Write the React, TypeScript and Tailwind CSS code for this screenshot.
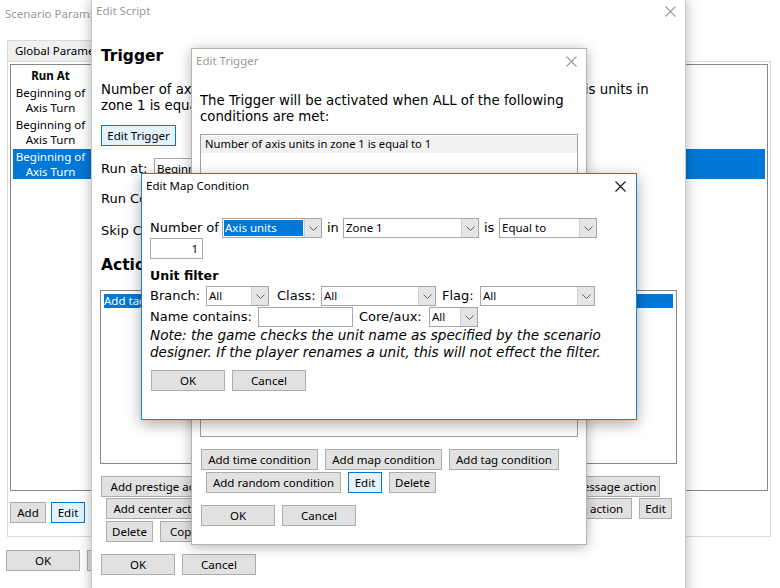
import type { ReactNode } from 'react'

const seg = "font-['Noto_Sans',sans-serif]"
const ver = "font-['DejaVu_Sans',sans-serif]"

function CloseX({ active = false }: { active?: boolean }) {
  return (
    <svg width="11" height="11" viewBox="0 0 11 11" className="shrink-0">
      <path d="M0.5 0.5 L10.5 10.5 M10.5 0.5 L0.5 10.5" stroke={active ? '#111' : '#9a9a9a'} strokeWidth="1.1" fill="none" />
    </svg>
  )
}

function Chevron() {
  return (
    <svg width="9" height="5" viewBox="0 0 9 5">
      <path d="M0.5 0.5 L4.5 4.5 L8.5 0.5" stroke="#606060" strokeWidth="1" fill="none" />
    </svg>
  )
}

function Btn({ label, className = '', focus = false }: { label: string; className?: string; focus?: boolean }) {
  return (
    <div
      className={`h-[21px] shrink-0 flex items-center justify-center border text-[11.5px] text-black whitespace-nowrap overflow-hidden ${seg} ${
        focus ? 'border-[#0078d7] bg-[#e5f1fb]' : 'border-[#adadad] bg-[#e1e1e1]'
      } ${className}`}
    >
      {label}
    </div>
  )
}

function Combo({ value, className = '', selected = false }: { value: string; className?: string; selected?: boolean }) {
  return (
    <div className={`h-[20px] shrink-0 flex border border-[#a6a6a6] bg-white ${className}`}>
      <div className="flex-1 min-w-0 p-[1px]">
        <div
          className={`h-full flex items-center px-[1px] text-[11.5px] whitespace-nowrap overflow-hidden ${seg} ${
            selected ? 'bg-[#0078d7] text-white' : 'text-black'
          }`}
        >
          {value}
        </div>
      </div>
      <div className="w-[17px] shrink-0 flex items-center justify-center bg-[#e5e5e5] border-l border-[#cfcfcf]">
        <Chevron />
      </div>
    </div>
  )
}

function Label({ children, className = '' }: { children: ReactNode; className?: string }) {
  return <span className={`shrink-0 text-[13px] text-black whitespace-nowrap ${ver} ${className}`}>{children}</span>
}

function ScenarioParams() {
  return (
    <div className="absolute inset-0 flex flex-col bg-white">
      <div className={`h-[28px] flex items-center pl-[5px] text-[11.5px] text-[#999] ${seg}`}>Scenario Params</div>
      <div className="mt-[12px] ml-[7px] flex">
        <div className={`h-[21px] px-[7px] flex items-center border border-b-0 border-[#d9d9d9] bg-[#f0f0f0] text-[11.5px] ${seg}`}>
          Global Parameters
        </div>
      </div>
      <div className="ml-[7px] w-[764px] h-[476px] border border-[#d9d9d9] p-[2px] flex flex-col">
        <div className="h-[427px] border border-[#828790] bg-white p-[2px] flex flex-col">
          <div className={`w-[75px] h-[18px] flex items-center justify-center text-[11.5px] font-bold ${seg}`}>Run At</div>
          {[false, false, true].map((sel, i) => (
            <div
              key={i}
              className={`h-[30px] mb-[2px] flex ${sel ? 'bg-[#0078d7] text-white' : 'text-black'}`}
            >
              <div className={`w-[75px] text-center text-[11.5px] leading-[15px] ${seg}`}>Beginning of Axis Turn</div>
            </div>
          ))}
        </div>
        <div className="mt-[11px] flex">
          <Btn label="Add" className="w-[36px]" />
          <Btn label="Edit" className="ml-[5px] w-[34px]" focus />
          <Btn label="Delete" className="ml-[6px] w-[48px]" />
        </div>
      </div>
      <div className="mt-[13px] ml-[6px] flex">
        <Btn label="OK" className="w-[74px]" />
        <Btn label="Cancel" className="ml-[7px] w-[74px]" />
      </div>
    </div>
  )
}

function EditScript() {
  return (
    <div className="absolute left-[91px] top-0 w-[595px] h-[600px] bg-white border-x border-[#c8c8c8] shadow-[0_0_12px_rgba(0,0,0,0.3)] flex flex-col">
      <div className="h-[22px] flex items-center justify-between pl-[4px] pr-[9px]">
        <span className={`text-[11.5px] text-[#999] ${seg}`}>Edit Script</span>
        <CloseX />
      </div>
      <div className="pl-[9px] flex flex-col">
        <div className={`mt-[25px] h-[20px] flex items-center text-[15.5px] font-bold ${ver}`}>Trigger</div>
        <p className={`mt-[15px] text-[13.3px] leading-[16px] whitespace-nowrap ${ver}`}>
          Number of axis units in zone 1 is greater than 100 and the number of axis units in
          <br />
          zone 1 is equal to 1
        </p>
        <Btn label="Edit Trigger" className="mt-[11px] w-[75px]" focus />
        <div className="mt-[12px] flex items-center h-[21px]">
          <Label className="w-[53px]">Run at:</Label>
          <Combo value="Beginning of Axis Turn" className="w-[200px] h-[21px]" />
        </div>
        <div className="mt-[9px] flex items-center h-[21px]">
          <Label className="w-[110px]">Run Count:</Label>
        </div>
        <div className="mt-[11px] flex items-center h-[21px]">
          <Label className="w-[110px]">Skip Chance:</Label>
        </div>
        <div className={`mt-[15px] h-[20px] flex items-center text-[15.5px] font-bold ${ver}`}>Actions</div>
        <div className="mt-[14px] -ml-[1px] w-[577px] h-[174px] border border-[#828790] p-[3px]">
          <div className={`h-[14px] flex items-center text-[11.5px] ${seg}`}>
            <span className="w-full h-full flex items-center bg-[#0078d7] text-white">Add tag 'axis' to units in zone 1</span>
          </div>
        </div>
        <div className="mt-[12px] flex">
          <Btn label="Add prestige action" className="w-[124px]" />
          <Btn label="Add victory action" className="ml-[7px] w-[112px]" />
          <Btn label="Add unit action" className="ml-[7px] w-[93px]" />
          <Btn label="Add fog action" className="ml-[7px] w-[86px]" />
          <Btn label="Add message action" className="ml-[7px] w-[116px]" />
        </div>
        <div className="mt-[1px] ml-[5px] flex">
          <Btn label="Add center action" className="w-[110px]" />
          <Btn label="Add weather action" className="ml-[7px] w-[118px]" />
          <Btn label="Add hex ownership action" className="ml-[7px] w-[169px]" />
          <Btn label="Add event action" className="ml-[7px] w-[108px]" />
          <Btn label="Edit" className="ml-[7px] w-[33px]" />
        </div>
        <div className="mt-[2px] ml-[5px] flex">
          <Btn label="Delete" className="w-[47px]" />
          <Btn label="Copy" className="ml-[7px] w-[47px]" />
          <Btn label="Paste" className="ml-[7px] w-[47px]" />
        </div>
        <div className="mt-[12px] flex">
          <Btn label="OK" className="w-[74px]" />
          <Btn label="Cancel" className="ml-[7px] w-[74px]" />
        </div>
      </div>
    </div>
  )
}

function EditTrigger() {
  return (
    <div className="absolute left-[191px] top-[48px] w-[396px] h-[497px] bg-white border border-[#b4b4b4] shadow-[0_2px_12px_rgba(0,0,0,0.3)] flex flex-col">
      <div className="h-[24px] flex items-center justify-between pl-[4px] pr-[9px]">
        <span className={`text-[11.5px] text-[#999] ${seg}`}>Edit Trigger</span>
        <CloseX />
      </div>
      <div className="pl-[8px] flex flex-col">
        <p className={`mt-[20px] text-[13.3px] leading-[16px] ${ver}`}>
          The Trigger will be activated when ALL of the following conditions are met:
        </p>
        <div className="mt-[9px] w-[378px] h-[303px] border border-[#a0a0a0] pt-[1px]">
          <div className={`h-[17px] flex items-center px-[4px] bg-[#f0f0f0] text-[11.2px] ${seg}`}>
            Number of axis units in zone 1 is equal to 1
          </div>
        </div>
        <div className="mt-[12px] ml-[1px] flex">
          <Btn label="Add time condition" className="w-[117px]" />
          <Btn label="Add map condition" className="ml-[7px] w-[117px]" />
          <Btn label="Add tag condition" className="ml-[7px] w-[110px]" />
        </div>
        <div className="mt-[2px] ml-[6px] flex">
          <Btn label="Add random condition" className="w-[135px]" />
          <Btn label="Edit" className="ml-[7px] w-[34px]" focus />
          <Btn label="Delete" className="ml-[7px] w-[47px]" />
        </div>
        <div className="mt-[12px] ml-[1px] flex">
          <Btn label="OK" className="w-[74px]" />
          <Btn label="Cancel" className="ml-[7px] w-[74px]" />
        </div>
      </div>
    </div>
  )
}

function EditMapCondition() {
  return (
    <div className="absolute left-[141px] top-[173px] w-[496px] h-[247px] bg-white border border-[#1c7fd6] shadow-[0_4px_14px_rgba(0,0,0,0.35)] flex flex-col">
      <div className="h-[24px] flex items-center justify-between pl-[4px] pr-[10px]">
        <span className={`text-[11.5px] text-black ${seg}`}>Edit Map Condition</span>
        <CloseX active />
      </div>
      <div className="pl-[8px] flex flex-col">
        <div className="mt-[20px] flex items-center">
          <Label className="w-[72px]">Number of</Label>
          <Combo value="Axis units" className="w-[100px]" selected />
          <Label className="w-[21px] pl-[5px]">in</Label>
          <Combo value="Zone 1" className="w-[136px]" />
          <Label className="w-[20px] pl-[5px]">is</Label>
          <Combo value="Equal to" className="w-[98px]" />
        </div>
        <div className={`w-[53px] h-[21px] border border-[#a6a6a6] flex items-center justify-end pr-[4px] text-[11.5px] ${seg}`}>1</div>
        <div className={`mt-[9px] h-[17px] flex items-center text-[12.6px] font-bold ${ver}`}>Unit filter</div>
        <div className="mt-[1px] flex items-center">
          <Label className="w-[56px]">Branch:</Label>
          <Combo value="All" className="w-[63px]" />
          <Label className="w-[52px] pl-[8px]">Class:</Label>
          <Combo value="All" className="w-[115px]" />
          <Label className="w-[44px] pl-[6px]">Flag:</Label>
          <Combo value="All" className="w-[115px]" />
        </div>
        <div className="mt-[1px] flex items-center">
          <Label className="w-[108px]">Name contains:</Label>
          <div className="w-[95px] h-[20px] border border-[#a6a6a6]" />
          <Label className="w-[76px] pl-[6px]">Core/aux:</Label>
          <Combo value="All" className="w-[49px]" />
        </div>
        <p className={`text-[13.55px] leading-[17px] italic whitespace-nowrap ${ver}`}>
          Note: the game checks the unit name as specified by the scenario
          <br />
          designer. If the player renames a unit, this will not effect the filter.
        </p>
        <div className="mt-[9px] ml-[1px] flex">
          <Btn label="OK" className="w-[74px]" />
          <Btn label="Cancel" className="ml-[7px] w-[74px]" />
        </div>
      </div>
    </div>
  )
}

export default function App() {
  return (
    <div className="relative w-[780px] h-[588px] overflow-hidden bg-white select-none">
      <ScenarioParams />
      <EditScript />
      <EditTrigger />
      <EditMapCondition />
    </div>
  )
}
